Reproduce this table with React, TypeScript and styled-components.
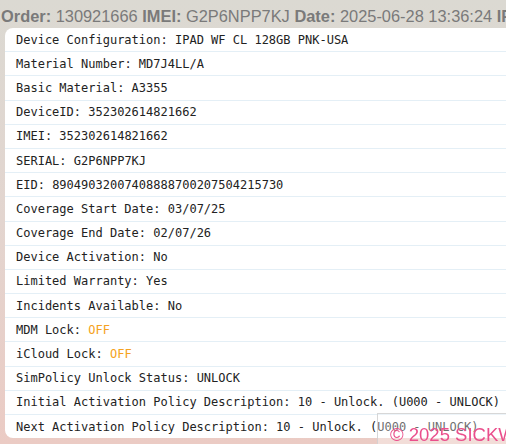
import React from "react";
import styled, { createGlobalStyle } from "styled-components";

const Global = createGlobalStyle`
  html, body { margin: 0; padding: 0; }
  body {
    width: 506px;
    height: 444px;
    overflow: hidden;
    background: linear-gradient(to bottom, #dbd9d2 0%, #e3d5cf 50%, #ebcbc4 100%);
    font-family: "Liberation Sans", Arial, sans-serif;
  }
`;

const Page = styled.div`
  width: 506px;
  height: 444px;
  overflow: hidden;
`;

const Header = styled.div`
  height: 28px;
  box-sizing: border-box;
  padding: 4px 0 0 1px;
  line-height: 24px;
  font-size: 16.4px;
  color: #7a7a7a;
  white-space: nowrap;
  overflow: hidden;
`;

const Label = styled.b`
  font-weight: bold;
`;

const Card = styled.div`
  margin-left: 5px;
  width: 540px;
  background: #fff;
  border-radius: 8px;
  overflow: hidden;
`;

const Row = styled.div`
  padding: 4.6px 11px;
  line-height: 14px;
  font-family: "DejaVu Sans Mono", monospace;
  font-size: 12px;
  color: #222;
  white-space: nowrap;
  border-bottom: 1px solid #e4eff6;
  &:last-child { border-bottom: none; }
`;

const Off = styled.span`
  color: #f5a221;
`;

const Watermark = styled.div`
  position: fixed;
  left: 377px;
  top: 413px;
  width: 200px;
  height: 60px;
  box-sizing: border-box;
  padding: 10px 0 0 12px;
  border: 1px solid rgba(205, 205, 205, 0.8);
  background: rgba(255, 255, 255, 0.35);
  color: #ea4f8c;
  font-family: "Liberation Sans", Arial, sans-serif;
  font-size: 18.5px;
  line-height: normal;
  white-space: nowrap;
`;

const rows: { k: string; v: string; off?: boolean }[] = [
  { k: "Device Configuration", v: "IPAD WF CL 128GB PNK-USA" },
  { k: "Material Number", v: "MD7J4LL/A" },
  { k: "Basic Material", v: "A3355" },
  { k: "DeviceID", v: "352302614821662" },
  { k: "IMEI", v: "352302614821662" },
  { k: "SERIAL", v: "G2P6NPP7KJ" },
  { k: "EID", v: "89049032007408888700207504215730" },
  { k: "Coverage Start Date", v: "03/07/25" },
  { k: "Coverage End Date", v: "02/07/26" },
  { k: "Device Activation", v: "No" },
  { k: "Limited Warranty", v: "Yes" },
  { k: "Incidents Available", v: "No" },
  { k: "MDM Lock", v: "OFF", off: true },
  { k: "iCloud Lock", v: "OFF", off: true },
  { k: "SimPolicy Unlock Status", v: "UNLOCK" },
  { k: "Initial Activation Policy Description", v: "10 - Unlock. (U000 - UNLOCK)" },
  { k: "Next Activation Policy Description", v: "10 - Unlock. (U000 - UNLOCK)" },
];

export default function App() {
  return (
    <Page>
      <Global />
      <Header>
        <Label>Order:</Label> 130921666 <Label>IMEI:</Label> G2P6NPP7KJ{" "}
        <Label>Date:</Label> 2025-06-28 13:36:24 <Label>IP:</Label> 0.0.0.0
      </Header>
      <Card>
        {rows.map((r) => (
          <Row key={r.k}>
            {r.k}: {r.off ? <Off>{r.v}</Off> : r.v}
          </Row>
        ))}
      </Card>
      <Watermark>© 2025 SICKW.COM</Watermark>
    </Page>
  );
}
